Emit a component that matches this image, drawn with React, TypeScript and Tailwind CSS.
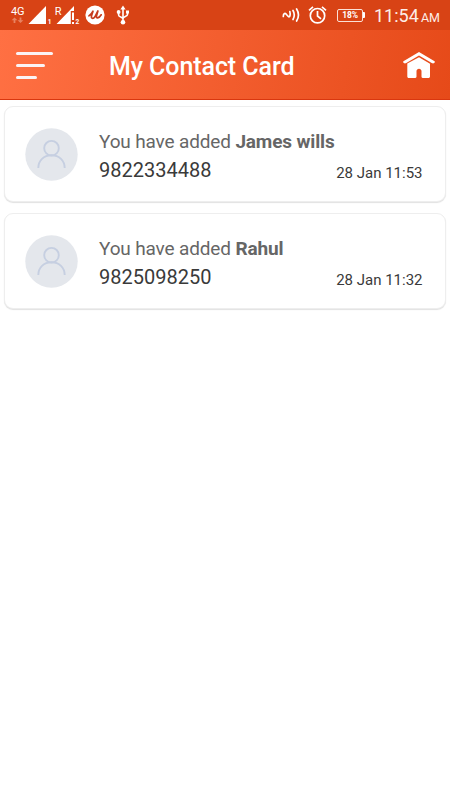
import React from "react";

type Contact = { name: string; phone: string; time: string };

const contacts: Contact[] = [
  { name: "James wills", phone: "9822334488", time: "28 Jan 11:53" },
  { name: "Rahul", phone: "9825098250", time: "28 Jan 11:32" },
];

function NetworkLabel() {
  return (
    <div className="ml-[11px] flex h-[30px] w-[14px] flex-col pt-[7px]">
      <span className="text-[11px] leading-[10px] tracking-[-0.3px] text-white">4G</span>
      <svg className="h-[7px] w-[14px]" viewBox="0 0 14 7" fill="#e88362">
        <path d="M3.5 .5L6.4 3.3H4.4V6H2.6V3.3H.6z" />
        <path d="M9.5 6L6.6 3.2h2V.5h1.8v2.7h2z" />
      </svg>
    </div>
  );
}

function SignalOne() {
  return (
    <svg className="ml-[3px] h-[30px] w-[25px]" viewBox="28 0 25 30" fill="#fff">
      <path d="M28.5 24L46 6v18z" />
      <text x="47.8" y="23.5" fontSize="6.5" fontWeight="700">1</text>
    </svg>
  );
}

function SignalTwo() {
  return (
    <svg className="ml-[2px] h-[30px] w-[26px]" viewBox="55 0 26 30" fill="#fff">
      <path d="M56.5 24L74 6v5h-3.200v13z" />
      <path d="M72 12.5h2v7.5h-2zM72 22h2v2h-2z" />
      <text x="54.8" y="15" fontSize="11" stroke="#d84315" strokeWidth="2" paintOrder="stroke">R</text>
      <text x="75.5" y="23.5" fontSize="6.5" fontWeight="700">2</text>
    </svg>
  );
}

function AppBadge() {
  return (
    <svg className="ml-[4px] h-[30px] w-[20px]" viewBox="85 0 20 30" fill="none">
      <circle cx="95" cy="15" r="9.6" fill="#fff" />
      <path
        d="M89 15.8C90.800 15 92.200 12.800 93 11.200L91.600 15.500C90.700 18.800 93.200 19.200 94.900 16.800L97.900 11L96.600 15.500C95.700 18.800 98.700 19 101.200 14.800"
        stroke="#c63b1d"
        strokeWidth="1.7"
        strokeLinecap="round"
        strokeLinejoin="round"
      />
    </svg>
  );
}

function UsbIcon() {
  return (
    <svg className="ml-[11px] h-[30px] w-[15px]" viewBox="116 0 15 30" fill="none" stroke="#fff">
      <path d="M123 8v14M118.6 12v3c0 2.4 4.4 1.6 4.4 4.2M127.5 12v2.5c0 2.4-4.5 1.6-4.5 4.2" strokeWidth="1.6" />
      <path d="M123 5.5l2.6 4h-5.2zM126 10.5h3v3h-3z" fill="#fff" stroke="none" />
      <circle cx="118.6" cy="12" r="1.9" fill="#fff" stroke="none" />
      <circle cx="123" cy="22.3" r="2.3" fill="#fff" stroke="none" />
    </svg>
  );
}

function NfcIcon() {
  return (
    <svg className="h-[30px] w-[18px]" viewBox="282 0 18 30" fill="none" stroke="#fff" strokeWidth="1.7" strokeLinecap="round">
      <path d="M283.3 16.500C283.300 13.500 284.800 12.800 286.200 14.200L288.300 16.500C289.700 17.800 290.800 15 289.800 11.500" strokeLinejoin="round" />
      <path d="M293 10.5c1.6 2.8 1.6 6.2 0 9M296.6 9c2.3 3.7 2.3 8.3 0 12" />
    </svg>
  );
}

function AlarmIcon() {
  return (
    <svg className="ml-[8px] h-[30px] w-[20px]" viewBox="308 0 20 30" fill="none" stroke="#fff" strokeWidth="1.7">
      <circle cx="317.5" cy="15.7" r="7.2" />
      <path d="M317.5 11v5l3.5 2.8M309 10.3l4-3.4M326 10.3l-4-3.4" />
    </svg>
  );
}

function BatteryIcon() {
  return (
    <div className="ml-[9px] flex h-[30px] items-center">
      <div className="flex h-[13px] w-[26px] items-center justify-center rounded-[2px] border border-[#fbe0d6] text-[8.5px] leading-none font-bold tracking-[-0.2px] text-white">
        18%
      </div>
      <div className="h-[6px] w-[2px] rounded-r-[1px] bg-white" />
    </div>
  );
}

function StatusBar() {
  return (
    <div className="flex h-[30px] items-center justify-between bg-[#d84315]">
      <div className="flex items-center">
        <NetworkLabel />
        <SignalOne />
        <SignalTwo />
        <AppBadge />
        <UsbIcon />
      </div>
      <div className="flex items-center pr-[10px]">
        <NfcIcon />
        <AlarmIcon />
        <BatteryIcon />
        <div className="ml-[9px] flex h-[30px] w-[66px] items-baseline justify-between pt-[3px] whitespace-nowrap text-[#fdeee8]">
          <span className="text-[18px] leading-[26px]">11:54</span>
          <span className="text-[12.5px]">AM</span>
        </div>
      </div>
    </div>
  );
}

function Header() {
  return (
    <header className="flex h-[70px] items-center border-b border-[#d9370f] bg-[linear-gradient(100deg,#ff7043,#e64a19)] px-4">
      <button aria-label="Menu" className="flex w-[93px] flex-col gap-[9px] pt-px">
        <span className="h-[3px] w-[37px] rounded-full bg-[#fbf3f5]" />
        <span className="h-[3px] w-[29px] rounded-full bg-[#fbf3f5]" />
        <span className="h-[3px] w-[21px] rounded-full bg-[#fbf3f5]" />
      </button>
      <h1 className="flex-1 pt-[4px] text-[25px] leading-[30px] font-medium tracking-[-0.08px] whitespace-nowrap text-white">My Contact Card</h1>
      <button aria-label="Home" className="-mr-[1px]">
        <svg className="h-[28px] w-[32px]" viewBox="403 51 32 28" fill="#fff">
          <path d="M419 52l15.6 9.2c.5.4.1 1.9-.9 2.1-.8.3-1.4-.1-2-.4L419 55.5l-12.7 7.4c-.6.3-1.2.7-2 .4-1-.2-1.4-1.7-.9-2.1z" />
          <path d="M419 57.3l11 6.4v12.8c0 .9-.7 1.5-1.5 1.5h-5.8c-.8 0-1.2-.6-1.2-1.4V71c0-1.3-1.1-2.3-2.5-2.3s-2.5 1-2.5 2.3v5.6c0 .8-.4 1.4-1.2 1.4h-6.5c-.9 0-1.5-.6-1.5-1.5V63.5z" />
        </svg>
      </button>
    </header>
  );
}

function Avatar() {
  return (
    <svg className="h-[53px] w-[53px] shrink-0" viewBox="0 0 53 53" fill="none">
      <circle cx="26.5" cy="26.5" r="26.2" fill="#e4e7ec" />
      <g stroke="#c6cfe1" strokeWidth="1.9">
        <circle cx="26.5" cy="20.2" r="7.3" />
        <path d="M13.3 40c0-7.5 5.5-12.7 13.2-12.7S39.7 32.5 39.7 40" />
      </g>
    </svg>
  );
}

function ContactCard({ name, phone, time }: Contact) {
  return (
    <article className="flex h-[96px] rounded-[9px] border border-[#eeeeee] bg-white pt-[21px] pr-[22px] pl-[20px] shadow-[0_1px_1px_rgba(0,0,0,0.12)]">
      <Avatar />
      <div className="ml-[21px] flex flex-1 flex-col">
        <p className="text-[19px] leading-[27px] tracking-[-0.15px] text-[#666666]">
          You have added <strong className="font-bold">{name}</strong>
        </p>
        <div className="flex items-baseline justify-between">
          <span className="text-[20px] leading-[30px] text-[#3a3a3a]">{phone}</span>
          <time className="relative top-px text-[15px] text-[#3a3a3a]">{time}</time>
        </div>
      </div>
    </article>
  );
}

export default function App() {
  return (
    <div className="h-[800px] w-[450px] overflow-hidden bg-white font-[Roboto,sans-serif]">
      <StatusBar />
      <Header />
      <main className="flex flex-col gap-[11.5px] pt-[5.5px] pr-[4.5px] pl-[4px]">
        {contacts.map((contact) => (
          <ContactCard key={contact.phone} {...contact} />
        ))}
      </main>
    </div>
  );
}
